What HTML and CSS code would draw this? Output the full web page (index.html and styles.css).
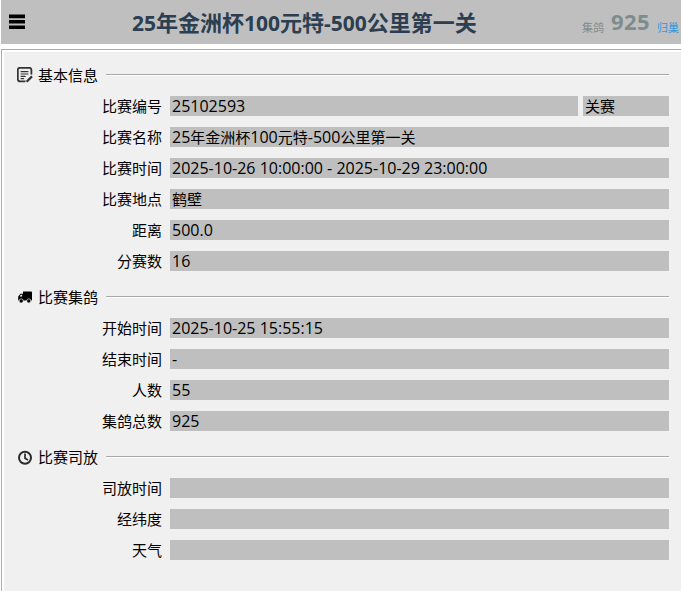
FILE: index.html
```html
<!DOCTYPE html>
<html lang="zh">
<head>
<meta charset="utf-8">
<title>比赛信息</title>
<link rel="stylesheet" href="styles.css">
</head>
<body>
<header class="topbar">
  <svg class="menu-icon" width="16" height="16" viewBox="0 0 16 16"><path d="M0 .6h16V4.2H0zM0 6h16v3.6H0zM0 11.4h16V15H0z" fill="#000"/></svg>
  <h1 class="title">25<span class="cn">年金洲杯</span>100<span class="cn">元特</span>-500<span class="cn">公里第一关</span></h1>
  <div class="stats">
    <span class="stat-label">集鸽</span>
    <span class="stat-num">925</span>
    <span class="stat-link">归巢</span>
  </div>
</header>
<main class="panel">
  <section class="group">
    <div class="legend">
      <svg class="legend-icon" width="16" height="16" viewBox="0 0 16 16" fill="none" stroke="#333"><path d="M8.5 14.4H3a2.2 2.2 0 0 1-2.2-2.2V3A2.2 2.2 0 0 1 3 .8h9.2A2.2 2.2 0 0 1 14.4 3v4.5" stroke-width="1.8"/><path d="M3.6 4.6h7.8M3.6 7h7.8M3.6 9.4h5M3.6 11.7h3.5" stroke-width="1.2"/><path d="M9.6 14.8l5.4-5.4" stroke-width="2.2"/></svg>
      <span class="legend-text">基本信息</span><span class="legend-line"></span>
    </div>
    <div class="row"><label class="label">比赛编号</label><div class="field grow">25102593</div><div class="field side"><span class="cn">关赛</span></div></div>
    <div class="row"><label class="label">比赛名称</label><div class="field grow">25<span class="cn">年金洲杯</span>100<span class="cn">元特</span>-500<span class="cn">公里第一关</span></div></div>
    <div class="row"><label class="label">比赛时间</label><div class="field grow">2025-10-26 10:00:00 - 2025-10-29 23:00:00</div></div>
    <div class="row"><label class="label">比赛地点</label><div class="field grow"><span class="cn">鹤壁</span></div></div>
    <div class="row"><label class="label">距离</label><div class="field grow">500.0</div></div>
    <div class="row"><label class="label">分赛数</label><div class="field grow">16</div></div>
  </section>
  <section class="group">
    <div class="legend">
      <svg class="legend-icon" width="16" height="16" viewBox="0 0 16 16"><path d="M6 2.6h8.2a.8.8 0 0 1 .8.8V11.5H1.2V7.6L3.5 4.8H6zM3.8 5.8L2.6 7.6H5.2V5.8z" fill="#000" fill-rule="evenodd"/><circle cx="4.2" cy="12" r="2.1" fill="#000" stroke="#f0f0f0" stroke-width=".7"/><circle cx="11.8" cy="12" r="2.1" fill="#000" stroke="#f0f0f0" stroke-width=".7"/></svg>
      <span class="legend-text">比赛集鸽</span><span class="legend-line"></span>
    </div>
    <div class="row"><label class="label">开始时间</label><div class="field grow">2025-10-25 15:55:15</div></div>
    <div class="row"><label class="label">结束时间</label><div class="field grow">-</div></div>
    <div class="row"><label class="label">人数</label><div class="field grow">55</div></div>
    <div class="row"><label class="label">集鸽总数</label><div class="field grow">925</div></div>
  </section>
  <section class="group">
    <div class="legend">
      <svg class="legend-icon" width="16" height="16" viewBox="0 0 16 16" fill="none" stroke="#2a2a2a"><circle cx="8" cy="8.8" r="6" stroke-width="2"/><path d="M8 4.6V9.2L11 11" stroke-width="1.7"/></svg>
      <span class="legend-text">比赛司放</span><span class="legend-line"></span>
    </div>
    <div class="row"><label class="label">司放时间</label><div class="field grow"></div></div>
    <div class="row"><label class="label">经纬度</label><div class="field grow"></div></div>
    <div class="row"><label class="label">天气</label><div class="field grow"></div></div>
  </section>
</main>
</body>
</html>
```
FILE: styles.css
```css
* { box-sizing: border-box; }
html, body { margin: 0; padding: 0; }
body {
  height: 591px;
  overflow: hidden;
  background: #fff;
  font-family: "Open Sans", "Noto Sans CJK SC", sans-serif;
  font-size: 15px;
  color: #000;
  padding-left: 1px;
}
.topbar {
  display: flex;
  align-items: center;
  height: 44px;
  background: #bfbfbf;
  padding-left: 8px;
}
.menu-icon { flex: none; }
.title {
  margin: 0 0 0 107px;
  font-size: 21px;
  font-weight: 700;
  line-height: 44px;
  color: #2c3e50;
  white-space: nowrap;
}
.title .cn { font-size: 22px; }
.stats {
  margin-left: auto;
  display: flex;
  align-items: baseline;
  padding-right: 2px;
  white-space: nowrap;
  transform: translateY(-1px);
}
.stat-label { font-size: 11px; color: #7f8c8d; transform: translateY(2px); }
.stat-num { font-size: 22px; font-weight: 700; letter-spacing: .4px; color: #7f8c8d; margin: 0 7px 0 7px; }
.stat-link { font-size: 11px; color: #3498db; transform: translateY(2px); }
.panel {
  margin-top: 5px;
  height: 542px;
  border-top: 1px solid #aaa;
  border-left: 1px solid #aaa;
  background: #f0f0f0;
  padding: 15px 12px 0 15px;
  box-shadow: inset 2px 2px 0 #fff;
}
.group { margin-bottom: 16px; }
.legend {
  display: flex;
  align-items: center;
  height: 20px;
  margin-bottom: 11px;
}
.legend-icon { flex: none; }
.legend-text { margin-left: 5px; line-height: 20px; }
.legend-line {
  flex: 1;
  height: 2px;
  margin-left: 8px;
  margin-top: -1px;
  background: #a8a8a8;
  border-bottom: 1px solid #fff;
}
.row {
  display: flex;
  height: 20px;
  margin-bottom: 11px;
}
.label {
  flex: none;
  width: 145px;
  margin-right: 8px;
  text-align: right;
  line-height: 20px;
}
.field {
  background: #bfbfbf;
  height: 20px;
  line-height: 20px;
  font-size: 16px;
  padding-left: 2px;
  white-space: nowrap;
}
.field .cn { font-size: 15px; }
.grow { flex: 1; }
.side { flex: none; width: 86px; margin-left: 5px; }
```
